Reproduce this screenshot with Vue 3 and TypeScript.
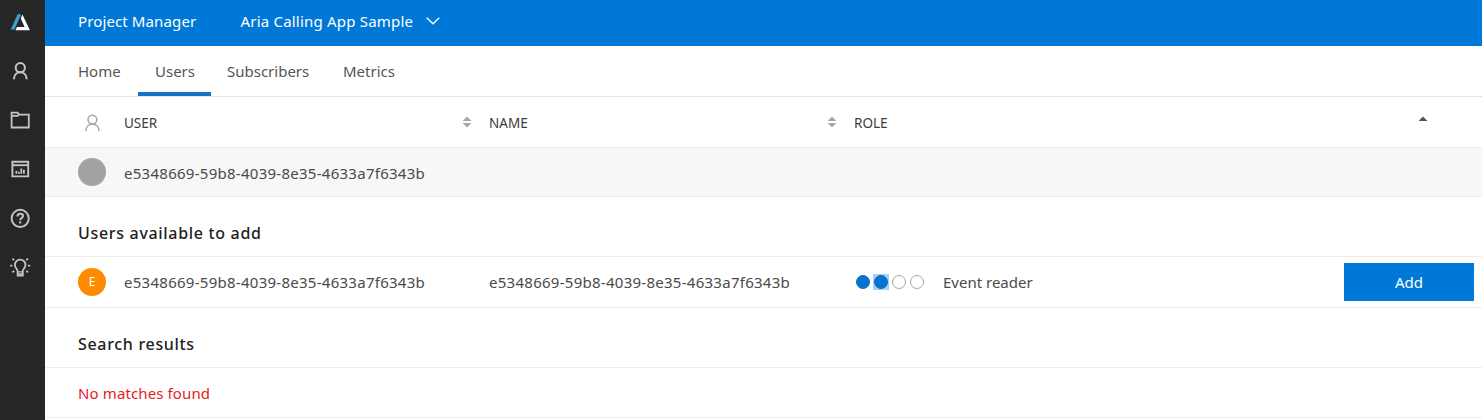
<script setup lang="ts">
interface Tab {
  label: string
  key: string
  active?: boolean
}

const tabs: Tab[] = [
  { label: 'Home', key: 'home' },
  { label: 'Users', key: 'users', active: true },
  { label: 'Subscribers', key: 'subscribers' },
  { label: 'Metrics', key: 'metrics' },
]

const userId = 'e5348669-59b8-4039-8e35-4633a7f6343b'
const roleLevels: string[] = ['on', 'on focused', '', '']
</script>

<template>
  <div class="app">
    <nav class="rail">
      <a class="rail-item">
        <svg width="20" height="18" viewBox="0 0 20 18">
          <path d="M7.6.2h3.6L4.4 15.6H.8z" fill="#3f9fd3" />
          <path d="M12.4.6 19.9 16.2H5.4l1.6-3.1h7.6L10.8 4.6z" fill="#fff" />
        </svg>
      </a>
      <a class="rail-item">
        <svg width="20" height="20" viewBox="0 0 20 20" fill="none" stroke="#c4c4c4" stroke-width="2">
          <circle cx="10.3" cy="6.7" r="4.6" />
          <path d="M3.9 18.2c.2-4.2 2.8-6.9 6.4-6.9s6.2 2.7 6.4 6.9" />
        </svg>
      </a>
      <a class="rail-item">
        <svg width="20" height="20" viewBox="0 0 20 20" fill="none" stroke="#c4c4c4" stroke-width="1.8">
          <path d="M1.6 2.6h6l1.6 2h9.6v12.9H1.6zM1.6 5.8h6l1.6-1.2" />
        </svg>
      </a>
      <a class="rail-item">
        <svg width="20" height="20" viewBox="0 0 20 20" fill="none" stroke="#c4c4c4">
          <path d="M2.4 2.8h15.8v14.6H2.4z" stroke-width="1.9" />
          <path d="M2 6.2h16" stroke-width="1.9" />
          <path d="M6.4 14.8v-3M8.9 14.8v-2M11.3 14.8V9.6M13.9 14.8v-4" stroke-width="1.8" />
        </svg>
      </a>
      <a class="rail-item">
        <svg width="20" height="20" viewBox="0 0 20 20" fill="none" stroke="#c4c4c4">
          <circle cx="10.2" cy="10.4" r="8.6" stroke-width="1.9" />
          <path d="M7.5 8.4c0-1.7 1.1-2.7 2.8-2.7s2.7.9 2.7 2.3c0 2-2.8 2.1-2.8 4.3" stroke-width="2" />
          <path d="M10.2 13.4v2" stroke-width="2.2" />
        </svg>
      </a>
      <a class="rail-item">
        <svg width="22" height="22" viewBox="0 0 22 22" fill="none" stroke="#c4c4c4">
          <path d="M8.6 15.3c0-2.3-2.7-3.4-2.7-6.4a5.3 5.3 0 0 1 10.6 0c0 3-2.7 4.1-2.7 6.4v4.4H8.6z" stroke-width="1.8" />
          <path d="M8.6 15.8h5.2M8.6 18h5.2" stroke-width="1.3" />
          <path d="M1.2 9.6h2.2M19 9.6h2.2M3.4 2.6l1.7 1.6M19 2.6l-1.7 1.6M3.4 16.4l1.7-1.6M19 16.4l-1.7-1.6" stroke-width="1.8" />
        </svg>
      </a>
    </nav>

    <main class="main">
      <header class="topbar">
        <span class="product">Project Manager</span>
        <span class="project">Aria Calling App Sample</span>
        <svg class="chevron" width="14" height="8" viewBox="0 0 14 8">
          <path d="M.7.8 7 6.8 13.3.8" fill="none" stroke="#fff" stroke-width="1.4" />
        </svg>
      </header>

      <div class="tabs">
        <a v-for="tab in tabs" :key="tab.key" class="tab" :class="[tab.key, { active: tab.active }]">
          <span>{{ tab.label }}</span>
        </a>
      </div>

      <div class="row head">
        <div class="lead">
          <svg width="28" height="20" viewBox="0 0 28 20" fill="none" stroke="#a6a6a6" stroke-width="1.5">
            <circle cx="14.4" cy="7.6" r="4.4" />
            <path d="M7.8 19c.2-4.2 2.9-7 6.6-7s6.4 2.8 6.6 7" />
          </svg>
        </div>
        <div class="cell user">
          <span class="h-user">USER</span>
          <svg class="sort" width="10" height="12" viewBox="0 0 10 12" fill="#a8a8a8">
            <path d="M5 .5 9.5 5h-9zM.5 7h9L5 11.5z" />
          </svg>
        </div>
        <div class="cell name">
          <span class="h-name">NAME</span>
          <svg class="sort" width="10" height="12" viewBox="0 0 10 12" fill="#a8a8a8">
            <path d="M5 .5 9.5 5h-9zM.5 7h9L5 11.5z" />
          </svg>
        </div>
        <div class="cell role">
          <span class="h-role">ROLE</span>
          <svg class="sort asc" width="10" height="12" viewBox="0 0 10 12" fill="#555">
            <path d="M5 .5 9.5 5h-9z" />
          </svg>
        </div>
      </div>

      <div class="row current">
        <div class="lead"><span class="avatar"></span></div>
        <div class="cell user"><span class="uuid">{{ userId }}</span></div>
      </div>

      <h2 class="section available"><span>Users available to add</span></h2>

      <div class="row candidate">
        <div class="lead"><span class="avatar orange">E</span></div>
        <div class="cell user"><span class="uuid">{{ userId }}</span></div>
        <div class="cell name"><span class="uuid">{{ userId }}</span></div>
        <div class="cell role">
          <span class="levels">
            <span v-for="(level, index) in roleLevels" :key="index" class="slot" :class="level">
              <i class="level"></i>
            </span>
          </span>
          <span class="role-name">Event reader</span>
          <button class="add" type="button">Add</button>
        </div>
      </div>

      <h2 class="section results"><span>Search results</span></h2>

      <div class="row empty"><span>No matches found</span></div>
    </main>
  </div>
</template>

<style>
body {
  margin: 0;
  background: #fff;
}
</style>

<style scoped>
.app {
  display: flex;
  width: 100%;
  height: 420px;
  overflow: hidden;
  background: #fff;
  color: #4a4a4a;
  font: 15px/20px "Noto Sans", "Open Sans", sans-serif;
  white-space: nowrap;
}
.rail {
  flex: none;
  width: 45px;
  background: #262626;
  display: flex;
  flex-direction: column;
}
.rail-item {
  width: 40px;
  height: 49.2px;
  display: flex;
  align-items: center;
  justify-content: center;
  flex: none;
}
.rail-item:first-child {
  height: 46px;
}
.main {
  flex: 1;
  min-width: 0;
  display: flex;
  flex-direction: column;
}
.topbar {
  flex: none;
  height: 46px;
  box-sizing: border-box;
  padding: 0 0 4px 33px;
  background: #0078d7;
  color: #fff;
  display: flex;
  align-items: center;
}
.product {
  width: 140px;
  height: 23px;
  line-height: 23px;
  border-right: 1px solid #1d6fbd;
  letter-spacing: 0.12px;
}
.project {
  width: 185px;
  margin-left: 21.5px;
  letter-spacing: 0.2px;
}
.tabs {
  flex: none;
  height: 51px;
  box-sizing: border-box;
  border-bottom: 1px solid #e3e3e3;
  padding-left: 17px;
  display: flex;
}
.tab {
  height: 50px;
  box-sizing: border-box;
  padding: 15px 16px 0;
  color: #555;
}
.tab.home {
  width: 76px;
}
.tab.users {
  width: 73px;
  padding-left: 17px;
}
.tab.subscribers {
  width: 116px;
}
.tab.active {
  border-bottom: 4px solid #1473c5;
}
.row {
  flex: none;
  box-sizing: border-box;
  padding-left: 33px;
  display: flex;
  align-items: center;
  border-bottom: 1px solid #ededed;
}
.lead {
  width: 46px;
  display: flex;
}
.cell {
  display: flex;
  align-items: center;
}
.user,
.name {
  width: 365px;
  flex: none;
}
.role {
  flex: 1;
}
.head {
  height: 51px;
  font-size: 13.5px;
  color: #3c3c3c;
}
.head .cell > span {
  padding-top: 1px;
}
.sort {
  margin-left: auto;
  margin-right: 17px;
}
.sort.asc {
  margin-right: 54px;
}
.current {
  height: 49px;
  background: #f7f7f7;
}
.current .uuid {
  padding-top: 1px;
}
.avatar {
  width: 28px;
  height: 28px;
  border-radius: 50%;
  background: #a3a3a3;
  display: flex;
  align-items: center;
  justify-content: center;
  color: #fff;
  font-size: 12px;
}
.avatar.orange {
  background: #ff8c00;
}
.uuid {
  letter-spacing: 0.27px;
}
.section {
  flex: none;
  height: 60px;
  box-sizing: border-box;
  margin: 0;
  padding: 26px 0 0 33px;
  border-bottom: 1px solid #ededed;
  font-size: 16px;
  line-height: 20px;
  font-weight: 500;
  letter-spacing: 0.68px;
  color: #222;
}
.candidate {
  height: 51px;
}
.levels {
  display: flex;
  width: 89px;
}
.slot {
  padding: 1px;
  margin: 0 1px;
}
.slot.focused {
  background: #a9d1f5;
}
.level {
  display: block;
  width: 14px;
  height: 14px;
  box-sizing: border-box;
  border: 1px solid #a5a5a5;
  border-radius: 50%;
}
.on .level {
  background: #0872cf;
  border-color: #0872cf;
}
.add {
  width: 130px;
  height: 38px;
  margin: 0 8px 0 auto;
  padding: 0;
  border: 0;
  background: #0078d7;
  color: #fff;
  font: inherit;
}
.empty {
  height: 50px;
  color: #e81a1f;
  letter-spacing: 0.12px;
}
</style>
